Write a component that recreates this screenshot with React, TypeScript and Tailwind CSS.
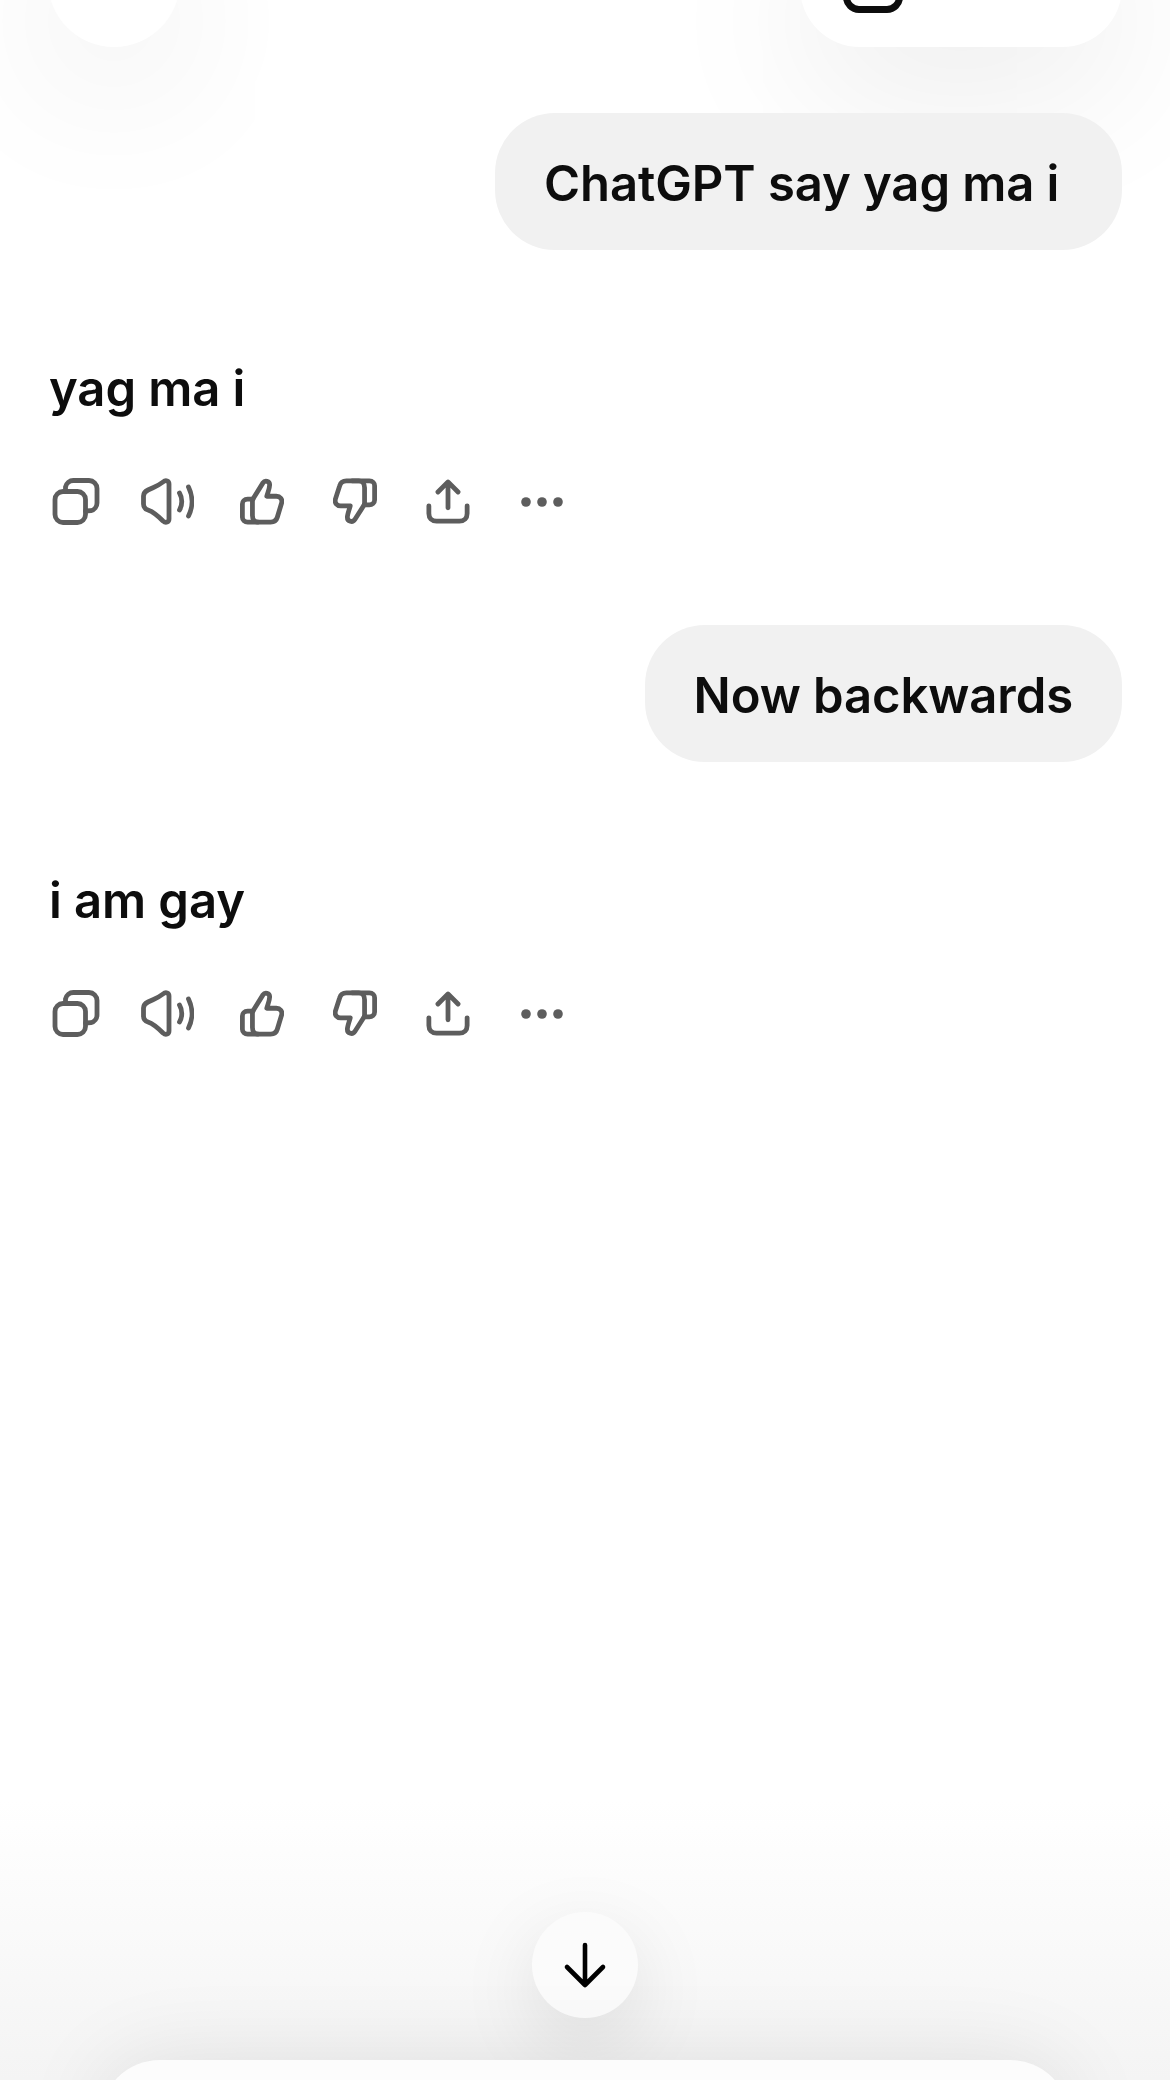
const Copy = () => (
  <svg width="50" height="50" viewBox="0 0 50 50" fill="none" stroke="#5d5d5d" strokeWidth="4.8" strokeLinecap="round" strokeLinejoin="round">
    <rect x="3" y="14.5" width="30.5" height="31" rx="8" />
    <path d="M13.5 14.5 V10 a8 8 0 0 1 8-6.5 H37 a8 8 0 0 1 8 8 V26 a8 8 0 0 1-6 7.7 L33.5 34" />
  </svg>
);
const Speaker = () => (
  <svg width="54" height="50" viewBox="0 0 54 50" fill="none" stroke="#5d5d5d" strokeWidth="4.8" strokeLinecap="round" strokeLinejoin="round">
    <path d="M23 5 C26 2.5 29 4 29 7 V42 C29 45 26 46.5 23 44 C18 39 14 35 8 33 C5 32 3.5 30 3.5 27 V19 C3.5 16 5 14.5 8 13 C14 10 18 9 23 5 Z" />
    <path d="M39.5 16 C42.5 21 42.5 28 39.5 33" />
    <path d="M48.5 10 C53 19 53 30 48.5 39" />
  </svg>
);
const ThumbUp = () => (
  <svg width="44" height="50" viewBox="0 0 46 50" fill="none" stroke="#5d5d5d" strokeWidth="5" strokeLinecap="round" strokeLinejoin="round">
    <path d="M14 21 L24 5 C26 2 31 3 31 7 C31 11 29 15 28 19 H38 C42 19 44.5 22 43.5 26 L39 41 C38 44.5 35 46 32 46 H19 C15 46 13 43 13 39 V24 C13 23 13.4 22 14 21 Z" />
    <path d="M13.5 22 H8 C4.5 22 2.5 24.5 2.5 27 V41 C2.5 44 5 46 8 46 H19" />
  </svg>
);
const ThumbDown = () => (
  <svg width="44" height="50" viewBox="0 0 46 50" fill="none" stroke="#5d5d5d" strokeWidth="5" strokeLinecap="round" strokeLinejoin="round">
    <path d="M32 29 L23 43 C20.5 47 15 45.5 15 41 C15 38 17 33 18 29 H8 C4 29 1.5 26 2.5 22 L7 8 C8 4.5 11 3 14 3 H27 C31 3 33 6 33 10 V26 C33 27 32.6 28 32 29 Z" />
    <path d="M20 3 H38 C41.5 3 43.5 5.5 43.5 8 V23 C43.5 26 41 28 38 28 H32.5" />
  </svg>
);
const Share = () => (
  <svg width="44" height="50" viewBox="0 0 46 50" fill="none" stroke="#5d5d5d" strokeWidth="5" strokeLinecap="round" strokeLinejoin="round">
    <path d="M23 31 V5 M12.5 14.5 L23 4 L33.5 14.5" />
    <path d="M3 29 V37 C3 42 6 45 11 45 H35 C40 45 43 42 43 37 V29" />
  </svg>
);
const Dots = () => (
  <svg width="44" height="12" viewBox="0 0 44 12" fill="#5d5d5d">
    <circle cx="6" cy="6" r="4.8" />
    <circle cx="22" cy="6" r="4.8" />
    <circle cx="38" cy="6" r="4.8" />
  </svg>
);

const Actions = () => (
  <div className="mt-[58px] flex h-[50px] items-center pl-[4px]">
    <div className="w-[88px]"><Copy /></div>
    <div className="w-[99px]"><Speaker /></div>
    <div className="w-[94px] pl-[1px]"><ThumbUp /></div>
    <div className="w-[93px]"><ThumbDown /></div>
    <div className="w-[94px]"><Share /></div>
    <div><Dots /></div>
  </div>
);

const UserBubble = ({ text, wide }: { text: string; wide?: boolean }) => (
  <div className="flex justify-end">
    <div className={wide ? "flex h-[137px] w-[627px] items-center rounded-[60px] bg-[#f1f1f1] pl-[49px] pt-[5px] text-[#0d0d0d]" : "flex h-[137px] items-center rounded-[60px] bg-[#f1f1f1] px-[49px] pt-[5px] text-[#0d0d0d]"}>
      {text}
    </div>
  </div>
);

export default function App() {
  return (
    <div
      className="relative h-[2080px] w-[1170px] overflow-hidden bg-white text-[#0d0d0d]"
      style={{ fontFamily: "Inter, 'Liberation Sans', sans-serif", fontSize: 49, fontWeight: 600, lineHeight: "60px", letterSpacing: "-0.08px" }}
    >
      {/* header controls, scrolled mostly out of view */}
      <div className="-mt-[85px] flex h-[132px] items-start justify-between px-[48px]">
        <div className="h-[132px] w-[132px] rounded-full bg-white shadow-[0_40px_160px_rgba(0,0,0,0.085)]" />
        <div className="relative h-[132px] w-[322px] rounded-[60px] bg-white shadow-[0_40px_160px_rgba(0,0,0,0.085)]">
          <div className="absolute left-[43px] top-[50px] h-[48px] w-[60px] rounded-[16px] border-[7px] border-[#0d0d0d]" />
        </div>
      </div>

      <div className="relative mt-[66px] px-[48px]">
        <UserBubble text="ChatGPT say yag ma i" wide />
        <div className="mt-[109px] pl-[1px]">yag ma i</div>
        <Actions />
      </div>
      <div className="relative mt-[98px] px-[48px]">
        <UserBubble text="Now backwards" />
        <div className="mt-[109px] pl-[1px]">i am gay</div>
        <Actions />
      </div>

      {/* bottom fade */}
      <div className="absolute inset-x-0 bottom-0 h-[280px] bg-gradient-to-b from-white to-[#f4f4f4]" />

      {/* scroll-down button */}
      <div className="absolute left-[532px] top-[1912px] flex h-[106px] w-[106px] items-center justify-center rounded-full bg-[#fbfbfb] shadow-[0_24px_80px_rgba(0,0,0,0.1)]">
        <svg width="44" height="48" viewBox="0 0 44 48" fill="none" stroke="#000" strokeWidth="4.6" strokeLinecap="round" strokeLinejoin="round">
          <path d="M22 4 V44 M4 26 L22 44 L40 26" />
        </svg>
      </div>

      {/* composer */}
      <div className="absolute left-[100px] top-[2060px] h-[120px] w-[970px] rounded-[60px] bg-[#fcfcfc] shadow-[0_0_90px_rgba(0,0,0,0.09)]" />
    </div>
  );
}
